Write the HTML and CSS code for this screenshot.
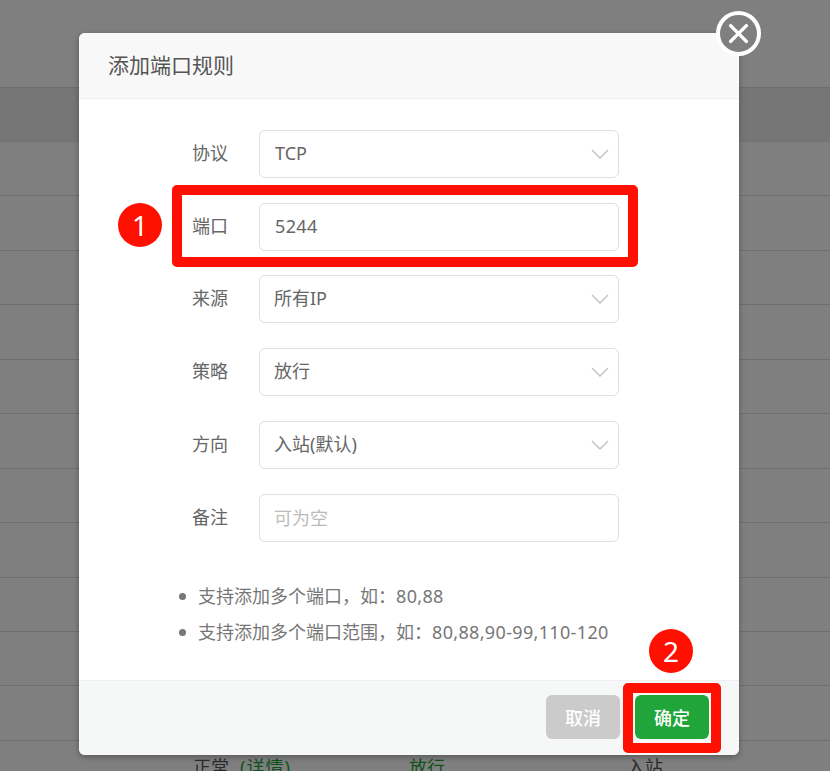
FILE: index.html
```html
<!DOCTYPE html>
<html lang="zh">
<head>
<meta charset="utf-8">
<title>添加端口规则</title>
<link rel="stylesheet" href="styles.css">
</head>
<body>
<div class="page">
  <div class="top"></div>
  <div class="row head"></div>
  <div class="row"></div><div class="row"></div><div class="row"></div><div class="row"></div><div class="row"></div>
  <div class="row"></div><div class="row"></div><div class="row"></div><div class="row"></div><div class="row"></div><div class="row"></div>
  <div class="row data">
    <span class="c1">正常<a class="link">(详情)</a></span>
    <span class="c2">放行</span>
    <span class="c3">入站</span>
  </div>
</div>
<div class="overlay"></div>
<section class="modal">
  <header class="modal-head">添加端口规则</header>
  <div class="modal-body">
    <div class="field"><label>协议</label><div class="control"><span class="lat">TCP</span><svg class="chev" viewBox="0 0 18 10"><path d="M1 1l8 8 8-8"/></svg></div></div>
    <div class="field"><label>端口</label><div class="control"><span class="lat num">5244</span></div></div>
    <div class="field"><label>来源</label><div class="control">所有IP<svg class="chev" viewBox="0 0 18 10"><path d="M1 1l8 8 8-8"/></svg></div></div>
    <div class="field"><label>策略</label><div class="control">放行<svg class="chev" viewBox="0 0 18 10"><path d="M1 1l8 8 8-8"/></svg></div></div>
    <div class="field"><label>方向</label><div class="control">入站(默认)<svg class="chev" viewBox="0 0 18 10"><path d="M1 1l8 8 8-8"/></svg></div></div>
    <div class="field"><label>备注</label><div class="control ph">可为空</div></div>
    <ul class="notes">
      <li>支持添加多个端口，如：<span class="num">80,88</span></li>
      <li>支持添加多个端口范围，如：<span class="num">80,88,90-99,110-120</span></li>
    </ul>
  </div>
  <footer class="modal-foot">
    <button class="btn cancel">取消</button>
    <button class="btn ok">确定</button>
  </footer>
</section>
<button class="close" aria-label="关闭"><svg viewBox="0 0 24 24"><path d="M3 3l18 18M21 3L3 21"/></svg></button>
<div class="mark box1"></div>
<div class="mark box2"></div>
<div class="badge b1">1</div>
<div class="badge b2">2</div>
</body>
</html>
```
FILE: styles.css
```css
* { box-sizing: border-box; }
html, body { margin: 0; height: 100%; }
body {
  width: 830px; height: 771px; overflow: hidden; position: relative;
  background: #fff; color: #666;
  font-family: "Noto Sans", "Noto Sans CJK SC", sans-serif;
}
.top { height: 86.58px; }
.row { height: 54.45px; border-top: 1px solid #dcdcdc; display: flex; }
.head { background: #ececec; border-bottom: 0; }
.row:nth-child(3) { border-top-color: #e4e4e4; }
.data { font-size: 18px; color: #555; position: relative; }
.data span { position: absolute; top: 13px; line-height: 26px; white-space: nowrap; }
.c1 { left: 193px; }
.c2 { left: 409px; color: #20a53a; }
.c3 { left: 627px; }
.link { color: #20a53a; margin-left: 11px; letter-spacing: 1px; }
.overlay { position: absolute; inset: 0; background: rgba(0,0,0,.5); }
.modal {
  position: absolute; left: 79px; top: 33px; width: 660px; height: 722px;
  background: #fff; border-radius: 6px; overflow: hidden;
  display: flex; flex-direction: column;
  box-shadow: 0 2px 6px rgba(0,0,0,.3);
}
.modal-head {
  height: 66px; padding-left: 29px; line-height: 65px; font-size: 21px; color: #555;
  background: #f8f8f8; border-bottom: 1px solid #eee; flex: none;
}
.modal-body { flex: 1; padding: 30.95px 0 0 114px; }
.field { display: flex; align-items: center; height: 48px; margin-bottom: 24.75px; }
.field label { width: 66px; font-size: 18px; color: #666; flex: none; padding-bottom: 4px; margin-left: -1px; margin-right: 1px; }
.control {
  width: 360px; height: 48px; border: 1px solid #dfdfe6; border-radius: 6px;
  padding: 0 0 2px 14px; line-height: 46px; font-size: 18px; color: #666;
  display: flex; justify-content: space-between; align-items: center;
}
.lat { margin-left: 1px; }
.num { letter-spacing: .34px; }
.ph { color: #bbb; padding-bottom: 0; }
.chev { width: 18px; height: 10px; margin: 0 9px -2px 0; fill: none; stroke: #c4c4c4; stroke-width: 1.5; }
.notes { list-style: none; margin: 36.5px 0 0 -16px; padding: 0; font-size: 18px; color: #777; }
.notes li { height: 36px; line-height: 36px; padding-left: 21px; position: relative; white-space: nowrap; }
.notes li::before {
  content: ""; position: absolute; left: 2px; top: 15px; width: 7px; height: 7px;
  border-radius: 50%; background: #777;
}
.modal-foot {
  height: 75px; flex: none; background: #f6f8f8; border-top: 1px solid #eef0f0;
  display: flex; justify-content: flex-end; gap: 15px; padding: 14px 30px 0 0;
}
.btn {
  width: 74px; height: 44px; border: 0; border-radius: 6px; padding: 0;
  color: #fff; font: 500 18px "Noto Sans CJK SC", sans-serif;
}
.cancel { background: #cbcbcb; }
.ok { background: #20a53a; }
.close {
  position: absolute; left: 716px; top: 11px; width: 45px; height: 45px; padding: 0;
  border: 4px solid #fff; border-radius: 50%; background: #7f7f7f;
  display: flex; align-items: center; justify-content: center;
}
.close svg { width: 21px; height: 21px; fill: none; stroke: #fff; stroke-width: 4; stroke-linecap: round; }
.mark { position: absolute; border: 10px solid #ff1000; border-radius: 5px; }
.box1 { left: 172px; top: 185px; width: 466px; height: 82px; }
.box2 { left: 623px; top: 683px; width: 98px; height: 70px; }
.badge {
  position: absolute; width: 44px; height: 44px; border-radius: 50%;
  background: #ff1000; color: #fff; text-align: center; font: 28px/44px "Noto Sans", sans-serif;
}
.b1 { left: 118px; top: 203px; }
.b2 { left: 649px; top: 629px; }
```
